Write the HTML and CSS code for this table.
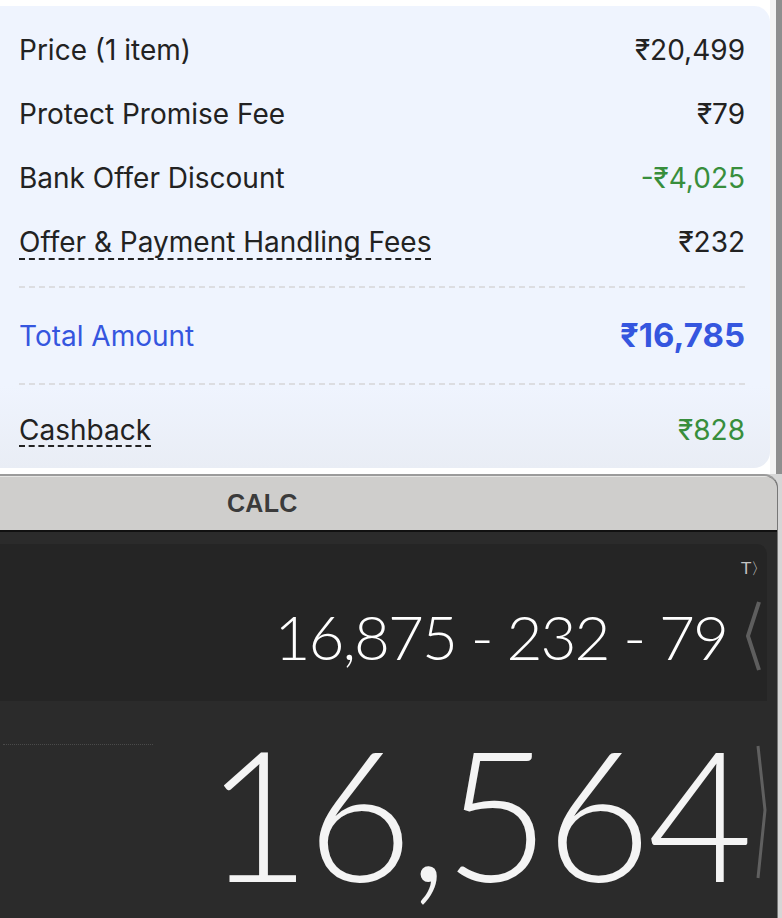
FILE: index.html
```html
<!DOCTYPE html>
<html lang="en">
<head>
<meta charset="utf-8">
<title>Price details and calculator</title>
<link rel="stylesheet" href="styles.css">
</head>
<body>
<div class="top">
  <section class="card">
    <div class="row"><span>Price (1 item)</span><span>₹20,499</span></div>
    <div class="row"><span>Protect Promise Fee</span><span>₹79</span></div>
    <div class="row"><span>Bank Offer Discount</span><span class="green">-₹4,025</span></div>
    <div class="row"><span class="dash">Offer &amp; Payment Handling Fees</span><span>₹232</span></div>
    <div class="sep sep-first"></div>
    <div class="row total"><span>Total Amount</span><span class="total-val">₹16,785</span></div>
    <div class="sep"></div>
    <div class="row cash"><span class="dash">Cashback</span><span class="green">₹828</span></div>
  </section>
  <div class="gap"></div>
  <div class="strip"></div>
</div>
<div class="calc">
  <div class="titlebar"><span class="title">CALC</span></div>
  <div class="band"></div>
  <div class="display">
    <div class="tape-tag">T〉</div>
    <div class="expr-line">
      <span class="expr">16,875 - 232 - 79</span>
      <svg class="chev-left" width="16" height="72" viewBox="0 0 16 72"><path d="M14 2 L3 36 L14 70" fill="none" stroke="#5e5e5e" stroke-width="4" stroke-linejoin="miter"/></svg>
    </div>
  </div>
  <div class="result">
    <div class="dots"></div>
    <div class="result-line">
      <span class="big">16,564</span>
      <svg class="chev-right" width="14" height="136" viewBox="0 0 14 136"><path d="M3 2 L10 66 L3 134" fill="none" stroke="#606060" stroke-width="3"/></svg>
    </div>
  </div>
</div>
</body>
</html>
```
FILE: styles.css
```css
* { box-sizing: border-box; }
html, body { margin: 0; padding: 0; }
body {
  width: 782px;
  height: 918px;
  overflow: hidden;
  background: #d6d6d6;
  font-family: "Inter", "Noto Sans", sans-serif;
}
.top {
  display: flex;
  height: 474px;
  background: #ffffff;
}
.card {
  flex: 0 0 770px;
  margin-top: 6px;
  height: 462px;
  border-radius: 0 16px 16px 0;
  background: linear-gradient(to bottom, #eff4fe 0, #eff4fe 380px, #e9edf5 100%);
  padding: 12px 25px 0 19px;
  color: #222222;
  font-size: 28px;
}
.gap { flex: 0 0 6px; background: #f4f4f4; }
.strip { flex: 0 0 6px; background: #8f8f8f; }
.row {
  display: flex;
  justify-content: space-between;
  align-items: center;
  height: 64px;
  line-height: 1;
}
.green { color: #388e3c; }
.dash {
  text-decoration: underline dashed #222;
  text-decoration-thickness: 1.5px;
  text-underline-offset: 6px;
}
.sep {
  height: 2px;
  background: repeating-linear-gradient(to right, #dcdde1 0 6px, transparent 6px 10px);
}
.sep-first { margin-top: 12px; }
.total {
  height: 95px;
  color: #3556df;
}
.total-val {
  font-weight: 700;
  font-size: 33px;
}
.cash { height: 89px; }

.calc {
  width: 778px;
  height: 444px;
  border-top: 2px solid #9b9b9b;
  border-radius: 0 14px 0 0;
  background: #2b2b2b;
  border-right: 1px solid #777;
  overflow: hidden;
}
.titlebar {
  height: 56px;
  background: #cfcecc;
  border-bottom: 2px solid #111;
  padding-left: 227px;
  display: flex;
  align-items: center;
  box-shadow: inset 0 1px 0 #e6e6e4;
}
.title {
  font-family: "Liberation Sans", Arial, sans-serif;
  font-weight: 700;
  font-size: 25px;
  color: #3b3b3b;
  letter-spacing: 0.3px;
}
.band { height: 12px; background: #2b2b2b; }
.display {
  height: 157px;
  margin-right: 10px;
  background: #252525;
  border-radius: 0 10px 0 0;
  padding: 16px 6px 0 0;
  color: #ffffff;
  font-family: "Lato", "Open Sans", sans-serif;
}
.tape-tag {
  text-align: right;
  font-family: "DejaVu Sans", sans-serif;
  font-size: 16px;
  color: #c4c4c4;
  line-height: 18px;
  margin-right: -6px;
}
.expr-line {
  display: flex;
  justify-content: flex-end;
  align-items: center;
  margin-top: 22px;
  gap: 18px;
}
.expr {
  font-weight: 300;
  font-size: 62px;
  line-height: 1;
  letter-spacing: -2px;
}
.chev-left { display: block; }
.result {
  height: 215px;
  background: #2b2b2b;
  position: relative;
}
.dots {
  position: absolute;
  left: 3px;
  top: 43px;
  width: 150px;
  border-top: 1px dotted #4a4a4a;
}
.result-line {
  display: flex;
  justify-content: flex-end;
  align-items: center;
  padding-top: 24px;
  padding-right: 8px;
  gap: 6px;
  color: #f4f4f4;
  font-family: "Lato", "Open Sans", sans-serif;
}
.big {
  font-weight: 300;
  font-size: 182px;
  line-height: 0.96;
  letter-spacing: -4px;
}
.chev-right { display: block; }
```
